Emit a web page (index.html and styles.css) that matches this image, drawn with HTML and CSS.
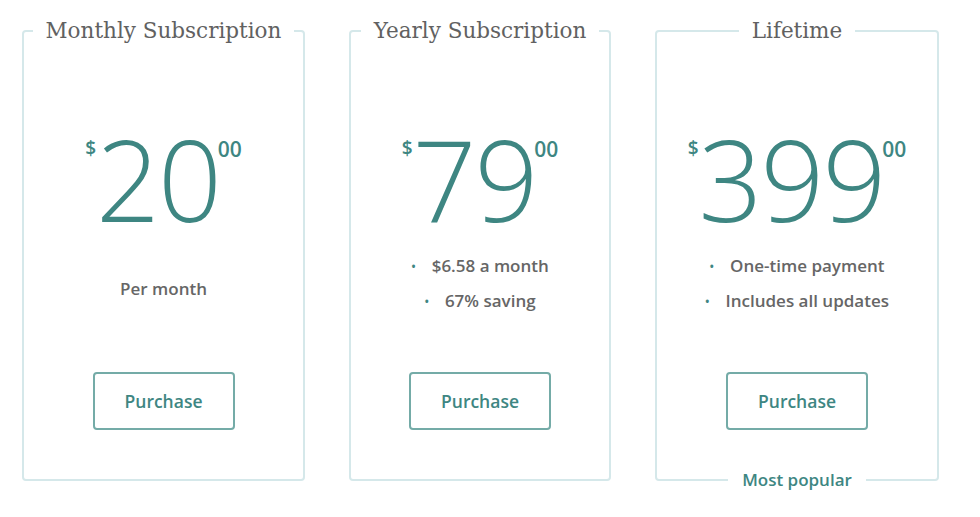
FILE: index.html
```html
<!DOCTYPE html>
<html lang="en">
<head>
<meta charset="utf-8">
<title>Pricing</title>
<link rel="stylesheet" href="styles.css">
</head>
<body>
<main class="plans">
  <div class="plan">
    <fieldset class="card">
      <legend class="card-title">Monthly Subscription</legend>
      <div class="card-body">
        <div class="price">
          <span class="currency">$</span><span class="amount">20</span><span class="cents">00</span>
        </div>
        <div class="details">
          <p class="per">Per month</p>
        </div>
        <button class="buy" type="button">Purchase</button>
      </div>
    </fieldset>
  </div>
  <div class="plan">
    <fieldset class="card">
      <legend class="card-title">Yearly Subscription</legend>
      <div class="card-body">
        <div class="price">
          <span class="currency">$</span><span class="amount">79</span><span class="cents">00</span>
        </div>
        <div class="details">
          <ul class="features">
            <li>$6.58 a month</li>
            <li>67% saving</li>
          </ul>
        </div>
        <button class="buy" type="button">Purchase</button>
      </div>
    </fieldset>
  </div>
  <div class="plan">
    <fieldset class="card">
      <legend class="card-title">Lifetime</legend>
      <div class="card-body">
        <div class="price">
          <span class="currency">$</span><span class="amount">399</span><span class="cents">00</span>
        </div>
        <div class="details">
          <ul class="features">
            <li>One-time payment</li>
            <li>Includes all updates</li>
          </ul>
        </div>
        <button class="buy" type="button">Purchase</button>
      </div>
    </fieldset>
    <div class="badge">Most popular</div>
  </div>
</main>
</body>
</html>
```

FILE: styles.css
```css
* { box-sizing: border-box; }

html, body {
  margin: 0;
  padding: 0;
  background: #ffffff;
}

body {
  min-height: 517px;
  font-family: "Open Sans", "Liberation Sans", sans-serif;
  color: #666666;
}

.plans {
  display: grid;
  grid-template-columns: 283px 262px 284px;
  column-gap: 44px;
  align-items: start;
  padding: 18px 0 20px 22px;
}

.plan {
  display: flex;
  flex-direction: column;
  align-items: center;
}

.card {
  margin: 0;
  padding: 0;
  min-width: 0;
  width: 100%;
  height: 463px;
  border: 2px solid #d5e8ea;
  border-radius: 4px;
}

.card-title {
  margin: 0 auto;
  padding: 0 13px;
  font-family: "DejaVu Serif", "Liberation Serif", serif;
  font-size: 21.5px;
  line-height: 26px;
  font-weight: 400;
  color: #616161;
}

.card-body {
  display: flex;
  flex-direction: column;
  align-items: center;
  height: 100%;
}

.price {
  display: flex;
  align-items: flex-start;
  justify-content: center;
  margin-top: 101px;
  color: #3e8682;
  height: 96px;
}

.currency {
  font-size: 19px;
  font-weight: 600;
  line-height: 1;
  margin-top: -6px;
}

.amount {
  font-size: 112px;
  font-weight: 300;
  line-height: 1;
  letter-spacing: -2px;
  margin-top: -22px;
}

.cents {
  font-size: 21px;
  font-weight: 600;
  line-height: 1;
  margin-top: -6px;
  margin-left: -2px;
}

.details {
  height: 131px;
  width: 100%;
}

.per {
  margin: 0;
  padding-top: 37px;
  text-align: center;
  font-size: 17px;
  font-weight: 600;
  line-height: 22px;
}

.features {
  list-style: none;
  margin: 0;
  padding: 8px 0 0;
  text-align: center;
  font-size: 17px;
  font-weight: 600;
  line-height: 34px;
}

.features li::before {
  content: "\2022";
  color: #3e8682;
  font-size: 12px;
  margin-right: 16px;
  vertical-align: 1px;
}

.buy {
  width: 142px;
  height: 58px;
  padding: 0;
  background: #ffffff;
  border: 2px solid #74aba7;
  border-radius: 4px;
  color: #3e8682;
  font-family: "Open Sans", "Liberation Sans", sans-serif;
  font-size: 17.5px;
  font-weight: 600;
  cursor: pointer;
}

.badge {
  position: relative;
  margin-top: -14px;
  padding: 0 14px;
  background: #ffffff;
  color: #3e8682;
  font-size: 17px;
  font-weight: 600;
  line-height: 26px;
  white-space: nowrap;
}
```
